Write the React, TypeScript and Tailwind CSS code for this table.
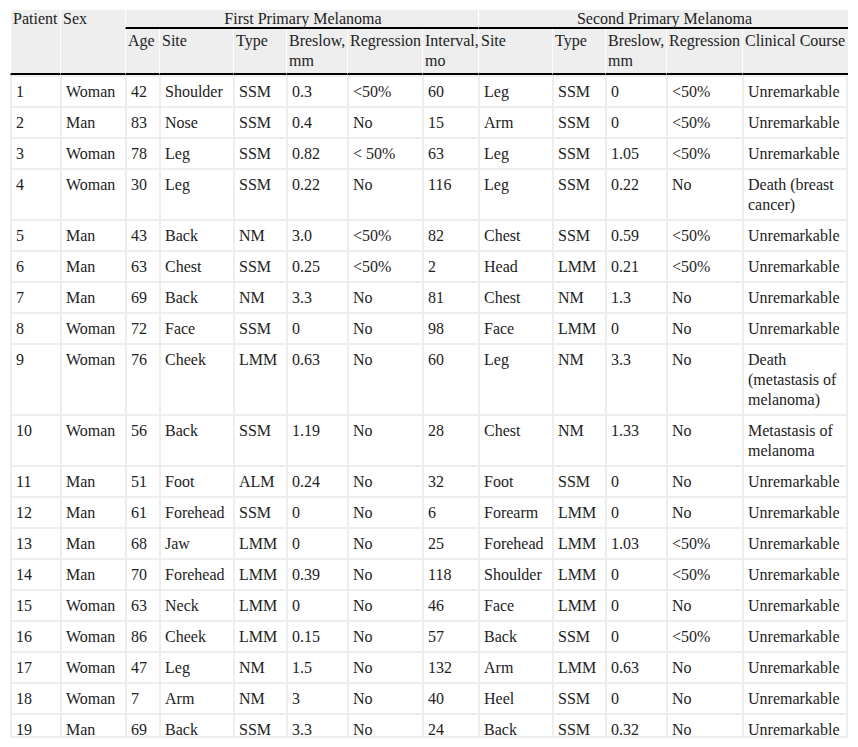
const widths = [50, 65, 34, 74, 53, 61, 75, 56, 74, 53, 61, 76, 106];

const rows: string[][] = [
  ["1", "Woman", "42", "Shoulder", "SSM", "0.3", "<50%", "60", "Leg", "SSM", "0", "<50%", "Unremarkable"],
  ["2", "Man", "83", "Nose", "SSM", "0.4", "No", "15", "Arm", "SSM", "0", "<50%", "Unremarkable"],
  ["3", "Woman", "78", "Leg", "SSM", "0.82", "< 50%", "63", "Leg", "SSM", "1.05", "<50%", "Unremarkable"],
  ["4", "Woman", "30", "Leg", "SSM", "0.22", "No", "116", "Leg", "SSM", "0.22", "No", "Death (breast cancer)"],
  ["5", "Man", "43", "Back", "NM", "3.0", "<50%", "82", "Chest", "SSM", "0.59", "<50%", "Unremarkable"],
  ["6", "Man", "63", "Chest", "SSM", "0.25", "<50%", "2", "Head", "LMM", "0.21", "<50%", "Unremarkable"],
  ["7", "Man", "69", "Back", "NM", "3.3", "No", "81", "Chest", "NM", "1.3", "No", "Unremarkable"],
  ["8", "Woman", "72", "Face", "SSM", "0", "No", "98", "Face", "LMM", "0", "No", "Unremarkable"],
  ["9", "Woman", "76", "Cheek", "LMM", "0.63", "No", "60", "Leg", "NM", "3.3", "No", "Death (metastasis of melanoma)"],
  ["10", "Woman", "56", "Back", "SSM", "1.19", "No", "28", "Chest", "NM", "1.33", "No", "Metastasis of melanoma"],
  ["11", "Man", "51", "Foot", "ALM", "0.24", "No", "32", "Foot", "SSM", "0", "No", "Unremarkable"],
  ["12", "Man", "61", "Forehead", "SSM", "0", "No", "6", "Forearm", "LMM", "0", "No", "Unremarkable"],
  ["13", "Man", "68", "Jaw", "LMM", "0", "No", "25", "Forehead", "LMM", "1.03", "<50%", "Unremarkable"],
  ["14", "Man", "70", "Forehead", "LMM", "0.39", "No", "118", "Shoulder", "LMM", "0", "<50%", "Unremarkable"],
  ["15", "Woman", "63", "Neck", "LMM", "0", "No", "46", "Face", "LMM", "0", "No", "Unremarkable"],
  ["16", "Woman", "86", "Cheek", "LMM", "0.15", "No", "57", "Back", "SSM", "0", "<50%", "Unremarkable"],
  ["17", "Woman", "47", "Leg", "NM", "1.5", "No", "132", "Arm", "LMM", "0.63", "No", "Unremarkable"],
  ["18", "Woman", "7", "Arm", "NM", "3", "No", "40", "Heel", "SSM", "0", "No", "Unremarkable"],
  ["19", "Man", "69", "Back", "SSM", "3.3", "No", "24", "Back", "SSM", "0.32", "No", "Unremarkable"],
];

const th = "bg-[#eeeeee] border-l border-l-white border-b-2 border-b-black pl-[2px] pr-0 text-left align-top font-normal";

const App = () => {
  return (
    <div className="min-h-screen bg-white pt-[10px] px-[10px] font-['Liberation_Serif'] text-[16px] text-[#222]">
      <div className="w-[838px] h-[726px] overflow-hidden border-b-2 border-[#eeeeee] box-content">
        <table className="table-fixed w-[838px] border-separate border-spacing-0 font-['Liberation_Serif']">
          <colgroup>
            {widths.map((w, i) => (
              <col key={i} style={{ width: w }} />
            ))}
          </colgroup>
          <thead>
            <tr className="leading-[17px]">
              <th rowSpan={2} className={th}>Patient</th>
              <th rowSpan={2} className={th}>Sex</th>
              <th colSpan={6} className={`${th} !text-center`}>First Primary Melanoma</th>
              <th colSpan={5} className={`${th} !text-center`}>Second Primary Melanoma</th>
            </tr>
            <tr className="leading-5">
              <th className={`${th} pt-[2px] pb-[2px]`}>Age</th>
              <th className={`${th} pt-[2px] pb-[2px]`}>Site</th>
              <th className={`${th} pt-[2px] pb-[2px]`}>Type</th>
              <th className={`${th} pt-[2px] pb-[2px]`}>Breslow,<br />mm</th>
              <th className={`${th} pt-[2px] pb-[2px]`}>Regression</th>
              <th className={`${th} pt-[2px] pb-[2px]`}>Interval,<br />mo</th>
              <th className={`${th} pt-[2px] pb-[2px]`}>Site</th>
              <th className={`${th} pt-[2px] pb-[2px]`}>Type</th>
              <th className={`${th} pt-[2px] pb-[2px]`}>Breslow,<br />mm</th>
              <th className={`${th} pt-[2px] pb-[2px]`}>Regression</th>
              <th className={`${th} pt-[2px] pb-[2px]`}>Clinical Course</th>
            </tr>
          </thead>
          <tbody>
            {rows.map((r) => (
              <tr key={r[0]} className="leading-5">
                {r.map((c, i) => (
                  <td
                    key={i}
                    className={`align-top border-t-2 border-l-2 border-[#eeeeee] pl-[4px] pr-[2px] pt-[5px] pb-[4px] ${i === r.length - 1 ? "border-r-2" : ""}`}
                  >
                    {c}
                  </td>
                ))}
              </tr>
            ))}
          </tbody>
        </table>
      </div>
    </div>
  );
};

export default App;
